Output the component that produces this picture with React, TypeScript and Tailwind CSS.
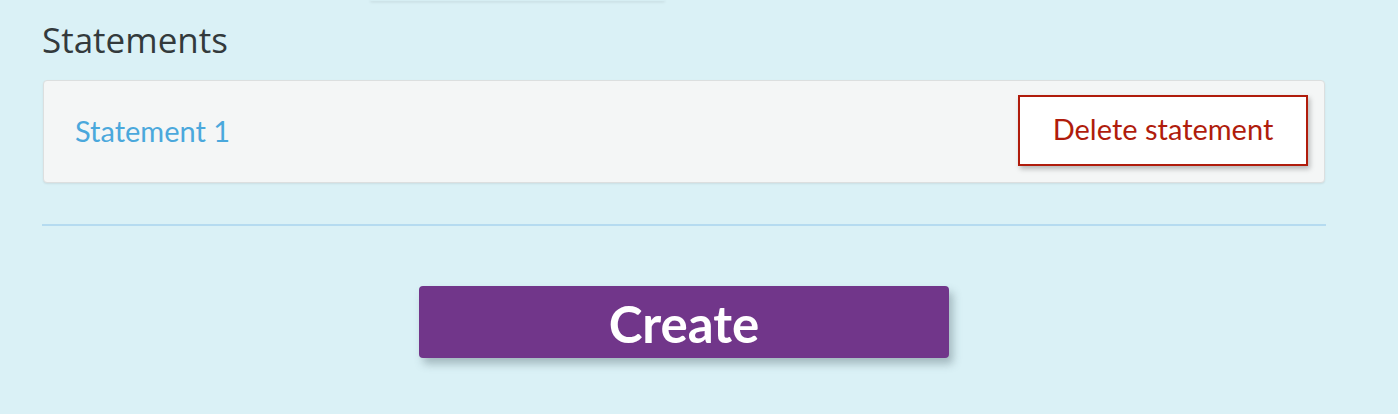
export default function App() {
  return (
    <div className="min-h-[414px] bg-[#daf1f6] font-['Lato','Open_Sans',sans-serif]">
      <div className="mx-auto flex w-[295px] -translate-x-[182px]">
        <div className="h-[1px] w-full rounded-b bg-[#d6eef3] shadow-[0_1px_3px_rgba(0,0,0,0.18)]" />
      </div>
      <div className="px-[42px] pt-[17px]">
        <h2 className="font-['Open_Sans',sans-serif] text-[35px] leading-[44px] text-[#333a3c]">Statements</h2>
        <div className="mt-[18px] ml-px mr-[31px] flex h-[103px] items-center justify-between rounded border border-[#dcdfdf] bg-[#f4f6f6] pr-[16px] pl-[31px] shadow-[0_1px_2px_rgba(0,0,0,0.08)]">
          <span className="pb-[2px] text-[29px] text-[#4aa8dc]">Statement 1</span>
          <button className="mb-[3px] flex h-[71px] w-[290px] items-center justify-center border-2 border-[#b01c0c] bg-white pb-[2px] text-[29px] text-[#b01c0c] shadow-[2px_3px_5px_rgba(0,0,0,0.25)]">
            Delete statement
          </button>
        </div>
        <div className="mt-[41px] mr-[30px] h-[2px] bg-[#b5dbf0]" />
        <div className="mr-[30px] flex justify-center pt-[60px]">
          <button className="h-[72px] w-[530px] rounded-sm bg-[#71368a] pb-[5px] text-[51px] font-bold text-white shadow-[4px_6px_8px_rgba(60,80,90,0.35)]">
            Create
          </button>
        </div>
      </div>
    </div>
  );
}
